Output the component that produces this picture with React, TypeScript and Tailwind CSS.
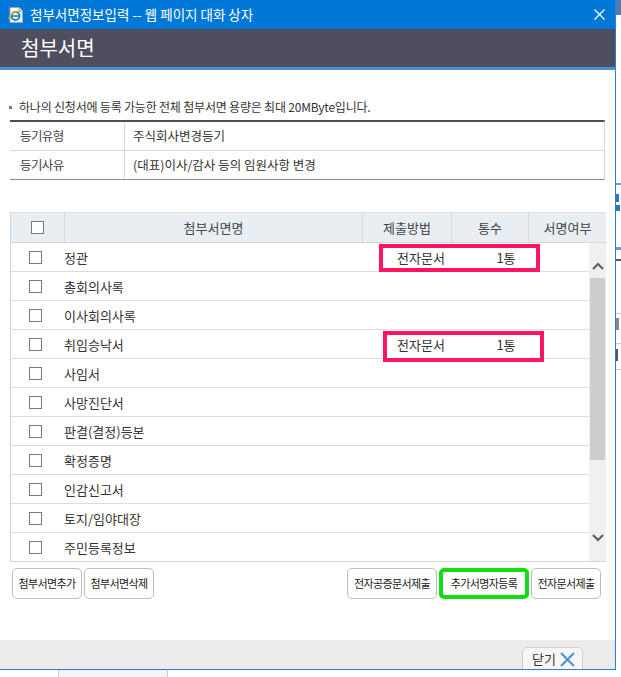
import React from 'react';

type Row = { name: string; method?: string; count?: string; mark?: 'a' | 'b' };

const rows: Row[] = [
  { name: '정관', method: '전자문서', count: '1통', mark: 'a' },
  { name: '총회의사록' },
  { name: '이사회의사록' },
  { name: '취임승낙서', method: '전자문서', count: '1통', mark: 'b' },
  { name: '사임서' },
  { name: '사망진단서' },
  { name: '판결(결정)등본' },
  { name: '확정증명' },
  { name: '인감신고서' },
  { name: '토지/임야대장' },
  { name: '주민등록정보' },
];

function Check({ className = '' }: { className?: string }) {
  return <span className={`block w-[13px] h-[13px] border border-[#7a7a7a] bg-white ${className}`} />;
}

function IeIcon() {
  return (
    <svg width="17" height="16" viewBox="0 0 17 16">
      <path d="M2 0.5 H11 L14.5 4 V15.5 H2 Z" fill="#fff" stroke="#9aa4b0" />
      <path d="M11 0.5 V4 H14.5" fill="#e8ecf0" stroke="#9aa4b0" />
      <circle cx="7.5" cy="9" r="4" fill="none" stroke="#1b7fd6" strokeWidth="2" />
      <path d="M4 9 H11" stroke="#1b7fd6" strokeWidth="1.6" />
      <path d="M1 12 C3 5 10 3 13 5" fill="none" stroke="#f2b705" strokeWidth="1.4" />
    </svg>
  );
}

function Chevron({ up }: { up?: boolean }) {
  return (
    <svg width="12" height="8" viewBox="0 0 12 8">
      <path d={up ? 'M1 7 L6 2 L11 7' : 'M1 1 L6 6 L11 1'} fill="none" stroke="#606060" strokeWidth="2.2" />
    </svg>
  );
}

function Btn({ label, w, green }: { label: string; w: string; green?: boolean }) {
  return (
    <button
      className={`${w} h-[31px] rounded-[5px] bg-white text-[11px] tracking-[-0.6px] text-[#222] leading-none ${
        green ? 'border-[4px] border-[#12dd12]' : 'border border-[#bdbdbd]'
      }`}
    >
      {label}
    </button>
  );
}

export default function App() {
  return (
    <div className="w-[621px] h-[677px] overflow-hidden bg-white flex font-['Noto_Sans_CJK_KR','Noto_Sans',sans-serif]">
      <div className="w-[616px] flex flex-col shrink-0">
        {/* window */}
        <div className="w-[616px] border-r border-b border-[#2a7fd4] flex flex-col">
          {/* title bar */}
          <div className="h-[29px] bg-[#0078d7] flex items-center pl-[8px] pr-[10px]">
            <IeIcon />
            <span className="ml-[5px] text-[13.5px] leading-none text-white">
              첨부서면정보입력 -- 웹 페이지 대화 상자
            </span>
            <svg className="ml-auto" width="11" height="11" viewBox="0 0 11 11">
              <path d="M0.5 0.5 L10.5 10.5 M10.5 0.5 L0.5 10.5" stroke="#fff" strokeWidth="1.2" />
            </svg>
          </div>
          <div className="h-[38px] bg-[#4f4e5f] flex items-center pl-[21px]">
            <span className="text-[20px] leading-none text-white">첨부서면</span>
          </div>
          <div className="h-[3px] bg-[#4d8fcd]" />

          {/* body */}
          <div className="h-[570px] bg-white flex flex-col pt-[29px]">
            <div className="h-[16px] flex items-center pl-[9px] text-[12px] leading-none tracking-[-0.2px] text-[#333]">
              <span className="w-[3px] h-[3px] bg-[#777] mr-[7px]" />
              하나의 신청서에 등록 가능한 전체 첨부서면 용량은 최대 20MByte입니다.
            </div>

            {/* info table */}
            <div className="mt-[5px] ml-[10px] w-[595px] border-t-2 border-t-[#4f4e5f] border-r border-r-[#d6d6d6] border-b border-b-[#8a8a8a] text-[12.5px] leading-none">
              <div className="h-[29px] flex border-b border-[#d9d9d9]">
                <div className="w-[115px] flex items-center pl-[10px] border-r border-[#d9d9d9] text-[#444] tracking-[-0.6px]">등기유형</div>
                <div className="flex-1 flex items-center pl-[8px] text-[#333]">주식회사변경등기</div>
              </div>
              <div className="h-[28px] flex">
                <div className="w-[115px] flex items-center pl-[10px] border-r border-[#d9d9d9] text-[#444] tracking-[-0.6px]">등기사유</div>
                <div className="flex-1 flex items-center pl-[8px] text-[#333]">(대표)이사/감사 등의 임원사항 변경</div>
              </div>
            </div>

            {/* attachments table */}
            <div className="mt-[32px] ml-[10px] w-[596px] border-t border-[#dcdcdc] border-l border-l-[#d4d4d4]">
              <div className="h-[30px] bg-[#e9eef3] flex border-b border-[#d6d6d6] text-[13px] leading-none text-[#444]">
                <div className="w-[54px] flex items-center justify-center border-r border-[#d6dbe1]">
                  <Check />
                </div>
                <div className="w-[298px] flex items-center justify-center border-r border-[#d6dbe1]">첨부서면명</div>
                <div className="w-[89px] flex items-center justify-center border-r border-[#d6dbe1]">제출방법</div>
                <div className="w-[77px] flex items-center justify-center border-r border-[#d6dbe1]">통수</div>
                <div className="flex-1 flex items-center justify-center">서명여부</div>
              </div>
              <div className="h-[319px] flex border-b border-[#d4d4d4]">
                <div className="w-[578px] overflow-hidden">
                  {rows.map((r) => (
                    <div key={r.name} className="relative h-[29px] flex items-center border-b border-[#dcdcdc] text-[13px] leading-none text-[#333]">
                      <div className="w-[49px] flex justify-center">
                        <Check />
                      </div>
                      <div className="w-[318px] pl-[4px]">{r.name}</div>
                      <div className="w-[86px] text-center">{r.method}</div>
                      <div className="w-[84px] text-center">{r.count}</div>
                      {r.mark === 'a' && (
                        <div className="absolute left-[368px] top-[1px] w-[161px] h-[28px] border-[4px] border-[#ff1464] z-10" />
                      )}
                      {r.mark === 'b' && (
                        <div className="absolute left-[372px] top-[1px] w-[161px] h-[31px] border-[4px] border-[#ff1464] z-10" />
                      )}
                    </div>
                  ))}
                </div>
                {/* scrollbar */}
                <div className="w-[17px] bg-[#f0f0f0] flex flex-col">
                  <div className="h-[35px] flex items-center justify-center pt-[11px]">
                    <Chevron up />
                  </div>
                  <div className="h-[182px] mx-[1px] bg-[#cdcdcd]" />
                  <div className="flex-1" />
                  <div className="h-[39px] flex items-center justify-center pb-[7px]">
                    <Chevron />
                  </div>
                </div>
              </div>
            </div>

            {/* buttons */}
            <div className="mt-[6px] flex pl-[12px] pr-[14px]">
              <div className="flex gap-[2px]">
                <Btn label="첨부서면추가" w="w-[70px]" />
                <Btn label="첨부서면삭제" w="w-[70px]" />
              </div>
              <div className="ml-auto flex gap-[2px]">
                <Btn label="전자공증문서제출" w="w-[90px]" />
                <Btn label="추가서명자등록" w="w-[90px]" green />
                <Btn label="전자문서제출" w="w-[70px]" />
              </div>
            </div>
          </div>

          {/* footer */}
          <div className="h-[29px] bg-[#ececec] flex justify-end pr-[32px] overflow-hidden">
            <div className="mt-[7px] w-[61px] h-[30px] rounded-t-[5px] border border-[#cfcfcf] bg-[#f6f6f6] flex items-start pt-[2px] pl-[9px] gap-[4px]">
              <span className="text-[13px] leading-[18px] text-[#333]">닫기</span>
              <svg className="mt-[2px]" width="15" height="15" viewBox="0 0 15 15">
                <path d="M1 1 L14 14 M14 1 L1 14" stroke="#4a90d4" strokeWidth="2" />
              </svg>
            </div>
          </div>
        </div>
        {/* page behind, bottom */}
        <div className="flex-1 flex pl-[58px]">
          <div className="w-[110px] bg-[#f4f4f7] border-x border-[#cccccc]" />
        </div>
      </div>

      {/* page behind, right edge */}
      <div className="flex-1 flex flex-col">
        <div className="h-[15px] bg-[#4f7fb0]" />
        <div className="h-[168px]" />
        <div className="h-[2px] bg-[#5aa0dc]" />
        <div className="h-[9px]" />
        <div className="h-[8px] w-[3px] bg-[#2b78c8]" />
        <div className="h-[3px]" />
        <div className="h-[6px] w-[4px] bg-[#2b78c8]" />
        <div className="h-[36px]" />
        <div className="h-[3px] bg-[#5aa0dc]" />
        <div className="h-[9px]" />
        <div className="h-[2px] bg-[#555a66]" />
        <div className="h-[52px]" />
        <div className="h-[1px] bg-[#cccccc]" />
        <div className="h-[4px]" />
        <div className="h-[12px] w-[3px] bg-[#888]" />
        <div className="h-[13px]" />
        <div className="h-[1px] bg-[#cccccc]" />
        <div className="h-[5px]" />
        <div className="h-[12px] w-[2px] bg-[#555]" />
        <div className="h-[8px]" />
        <div className="h-[1px] bg-[#cccccc]" />
      </div>
    </div>
  );
}
